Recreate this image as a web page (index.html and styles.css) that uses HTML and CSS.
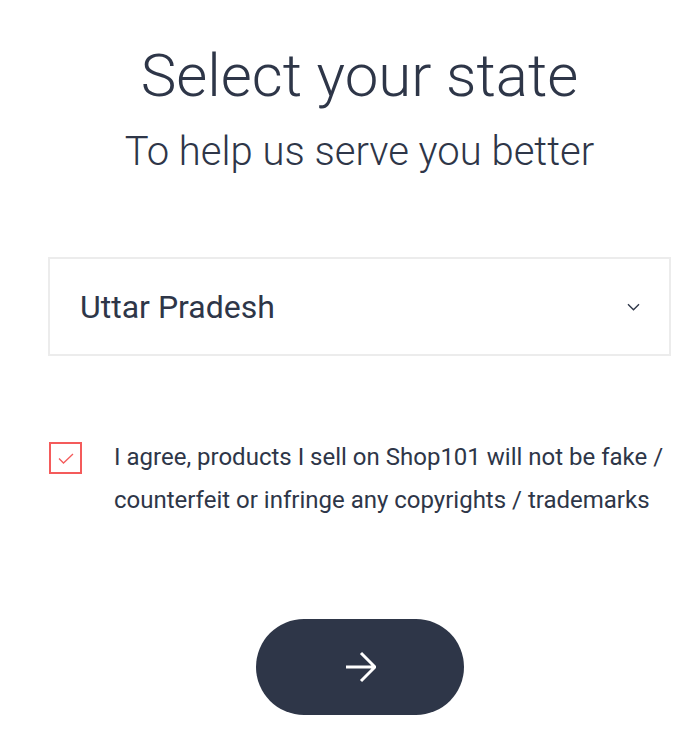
FILE: index.html
```html
<!DOCTYPE html>
<html lang="en">
<head>
    <meta charset="UTF-8">
    <meta name="viewport" content="width=device-width, initial-scale=1.0">
    <title>Select State</title>
    <link rel="stylesheet" href="styles.css">
</head>
<body>
<div class="page">
    <h1 class="title">Select your state</h1>
    <p class="subtitle">To help us serve you better</p>

    <div class="state-select">
        <span class="state-name">Uttar Pradesh</span>
        <svg class="chevron" width="13" height="8" viewBox="0 0 13 8">
            <path d="M1 1.2l5.5 5.5 5.5-5.5" fill="none" stroke="#2e3648" stroke-width="1.4"/>
        </svg>
    </div>

    <label class="agree">
        <span class="checkbox">
            <svg width="16" height="11" viewBox="0 0 16 11">
                <path d="M1 5.5l4.5 4.5L15 1" fill="none" stroke="#f45b5b" stroke-width="1.3"/>
            </svg>
        </span>
        <span class="agree-text">I agree, products I sell on Shop101 will not be fake / counterfeit or infringe any copyrights / trademarks</span>
    </label>

    <button class="next" type="button">
        <svg width="32" height="32" viewBox="0 0 32 32">
            <path d="M2 16h29M17 2l14 14-14 14" fill="none" stroke="#fff" stroke-width="3"/>
        </svg>
    </button>
</div>
</body>
</html>
```

FILE: styles.css
```css
body {
    margin: 0;
    background: #fff;
    color: #2e3648;
    font-family: Roboto, "Liberation Sans", sans-serif;
}

.page {
    display: flex;
    flex-direction: column;
    padding: 40px 0 0 36px;
}

.title {
    margin: 0;
    text-align: center;
    font-size: 60px;
    font-weight: 300;
    line-height: 72px;
}

.subtitle {
    margin: 16px 0 0;
    text-align: center;
    font-size: 40px;
    font-weight: 300;
    line-height: 48px;
}

.state-select {
    display: flex;
    align-items: center;
    justify-content: space-between;
    height: 95px;
    margin: 81px 12px 0;
    padding: 0 29px 0 30px;
    border: 2px solid #ececec;
}

.state-name {
    font-size: 32px;
}

.chevron {
    display: block;
}

.agree {
    display: flex;
    align-items: flex-start;
    margin: 80px 12px 0 13px;
}

.checkbox {
    display: flex;
    align-items: center;
    justify-content: center;
    flex: none;
    width: 29px;
    height: 28px;
    margin-top: 6px;
    border: 2px solid #f45b5b;
}

.agree-text {
    margin-left: 32px;
    font-size: 24px;
    line-height: 43px;
}

.next {
    display: flex;
    align-items: center;
    justify-content: center;
    align-self: center;
    width: 208px;
    height: 96px;
    margin-top: 97px;
    border: none;
    border-radius: 48px;
    background: #2e3648;
    cursor: pointer;
}
```
